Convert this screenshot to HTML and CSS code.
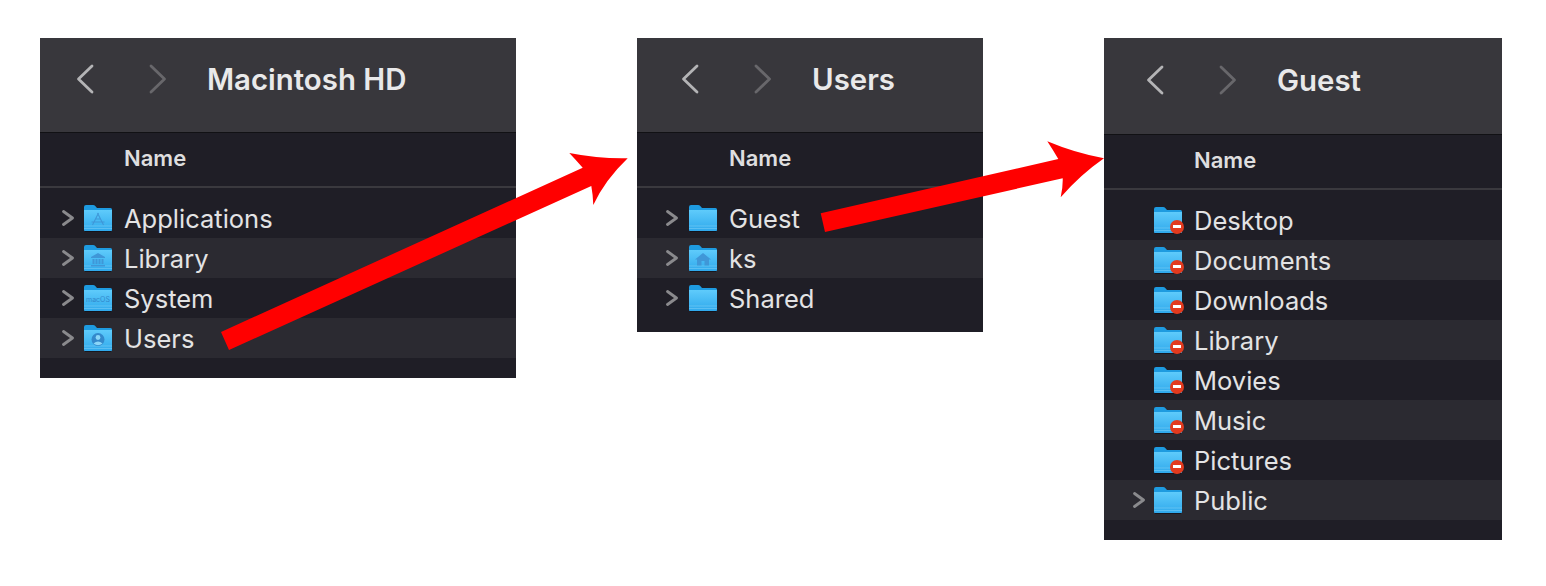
FILE: index.html
```html
<!DOCTYPE html>
<html lang="en">
<head>
    <meta charset="UTF-8">
    <title>Finder folders</title>
    <link rel="stylesheet" href="styles.css">
</head>
<body>

<svg class="defs" width="0" height="0">
    <defs>
        <linearGradient id="folderBody" x1="0" y1="0" x2="0" y2="1">
            <stop offset="0" stop-color="#5fcbfb"/>
            <stop offset="1" stop-color="#2fa9ec"/>
        </linearGradient>
        <symbol id="folder" viewBox="0 0 28 27">
            <path d="M0 2Q0 0 2 0H9Q10.500 0 11.500 1.200L13 3H26.500Q28 3 28 4.500V24.500Q28 26 26.500 26H1.500Q0 26 0 24.500Z" fill="#1e9be0"/>
            <path d="M0 5H28V24.500Q28 26 26.500 26H1.500Q0 26 0 24.500Z" fill="url(#folderBody)"/>
            <path d="M0 21H28M0 23.500H28" stroke="#86d4f8" stroke-width="0.700" opacity="0.700"/>
            <path d="M1 26.500H27" stroke="#0d0d14" stroke-width="1" opacity="0.600"/>
        </symbol>
    </defs>
</svg>

<div class="page">

    <!-- Macintosh HD -->
    <section class="window win-first">
        <div class="toolbar">
            <svg class="nav back" viewBox="0 0 18 30"><path d="M16 2L2.500 15L16 28"/></svg>
            <svg class="nav forward" viewBox="0 0 18 30"><path d="M2 2L15.500 15L2 28"/></svg>
            <span class="title">Macintosh HD</span>
        </div>
        <div class="header"><span class="name-col">Name</span></div>
        <div class="rows">
            <div class="row">
                <svg class="chevron" viewBox="0 0 12 16"><path d="M1.500 1.500L10.500 8L1.500 14.500"/></svg>
                <span class="icon">
                    <svg class="folder"><use href="#folder"/></svg>
                    <svg class="badge" viewBox="0 0 28 27"><path d="M14.500 8L8.500 20M13.500 8L19.500 20M7.500 17H20.500M11 14H17" stroke="#3f97d8" stroke-width="1.100" fill="none"/></svg>
                </span>
                <span class="label">Applications</span>
            </div>
            <div class="row">
                <svg class="chevron" viewBox="0 0 12 16"><path d="M1.500 1.500L10.500 8L1.500 14.500"/></svg>
                <span class="icon">
                    <svg class="folder"><use href="#folder"/></svg>
                    <svg class="badge" viewBox="0 0 28 27"><path d="M14 8L21 12V13H7V12ZM8.500 14H10.500V19H8.500ZM11.500 14H13.500V19H11.500ZM14.500 14H16.500V19H14.500ZM17.500 14H19.500V19H17.500ZM7 20H21V21.500H7Z" fill="#3f97d8"/></svg>
                </span>
                <span class="label">Library</span>
            </div>
            <div class="row">
                <svg class="chevron" viewBox="0 0 12 16"><path d="M1.500 1.500L10.500 8L1.500 14.500"/></svg>
                <span class="icon">
                    <svg class="folder"><use href="#folder"/></svg>
                    <span class="macos">macOS</span>
                </span>
                <span class="label">System</span>
            </div>
            <div class="row">
                <svg class="chevron" viewBox="0 0 12 16"><path d="M1.500 1.500L10.500 8L1.500 14.500"/></svg>
                <span class="icon">
                    <svg class="folder"><use href="#folder"/></svg>
                    <svg class="badge" viewBox="0 0 28 27"><circle cx="14" cy="14.500" r="6.500" fill="#3389cc"/><circle cx="14" cy="12.500" r="2.400" fill="#8ad6f8"/><path d="M9.500 18.500Q14 14.500 18.500 18.500Q14 22 9.500 18.500Z" fill="#8ad6f8"/></svg>
                </span>
                <span class="label">Users</span>
            </div>
        </div>
    </section>

    <!-- Users -->
    <section class="window win-second">
        <div class="toolbar">
            <svg class="nav back" viewBox="0 0 18 30"><path d="M16 2L2.500 15L16 28"/></svg>
            <svg class="nav forward" viewBox="0 0 18 30"><path d="M2 2L15.500 15L2 28"/></svg>
            <span class="title">Users</span>
        </div>
        <div class="header"><span class="name-col">Name</span></div>
        <div class="rows">
            <div class="row">
                <svg class="chevron" viewBox="0 0 12 16"><path d="M1.500 1.500L10.500 8L1.500 14.500"/></svg>
                <span class="icon"><svg class="folder"><use href="#folder"/></svg></span>
                <span class="label">Guest</span>
            </div>
            <div class="row">
                <svg class="chevron" viewBox="0 0 12 16"><path d="M1.500 1.500L10.500 8L1.500 14.500"/></svg>
                <span class="icon">
                    <svg class="folder"><use href="#folder"/></svg>
                    <svg class="badge" viewBox="0 0 28 27"><path d="M14 8L22 14.500H20V20.500H8V14.500H6ZM12.500 16V20.500H15.500V16Z" fill="#3f97d8"/></svg>
                </span>
                <span class="label">ks</span>
            </div>
            <div class="row">
                <svg class="chevron" viewBox="0 0 12 16"><path d="M1.500 1.500L10.500 8L1.500 14.500"/></svg>
                <span class="icon"><svg class="folder"><use href="#folder"/></svg></span>
                <span class="label">Shared</span>
            </div>
        </div>
    </section>

    <!-- Guest -->
    <section class="window win-third">
        <div class="toolbar">
            <svg class="nav back" viewBox="0 0 18 30"><path d="M16 2L2.500 15L16 28"/></svg>
            <svg class="nav forward" viewBox="0 0 18 30"><path d="M2 2L15.500 15L2 28"/></svg>
            <span class="title">Guest</span>
        </div>
        <div class="header"><span class="name-col">Name</span></div>
        <div class="rows">
            <div class="row">
                <span class="chevron-gap"></span>
                <span class="icon"><svg class="folder"><use href="#folder"/></svg><span class="no-access"></span></span>
                <span class="label">Desktop</span>
            </div>
            <div class="row">
                <span class="chevron-gap"></span>
                <span class="icon"><svg class="folder"><use href="#folder"/></svg><span class="no-access"></span></span>
                <span class="label">Documents</span>
            </div>
            <div class="row">
                <span class="chevron-gap"></span>
                <span class="icon"><svg class="folder"><use href="#folder"/></svg><span class="no-access"></span></span>
                <span class="label">Downloads</span>
            </div>
            <div class="row">
                <span class="chevron-gap"></span>
                <span class="icon"><svg class="folder"><use href="#folder"/></svg><span class="no-access"></span></span>
                <span class="label">Library</span>
            </div>
            <div class="row">
                <span class="chevron-gap"></span>
                <span class="icon"><svg class="folder"><use href="#folder"/></svg><span class="no-access"></span></span>
                <span class="label">Movies</span>
            </div>
            <div class="row">
                <span class="chevron-gap"></span>
                <span class="icon"><svg class="folder"><use href="#folder"/></svg><span class="no-access"></span></span>
                <span class="label">Music</span>
            </div>
            <div class="row">
                <span class="chevron-gap"></span>
                <span class="icon"><svg class="folder"><use href="#folder"/></svg><span class="no-access"></span></span>
                <span class="label">Pictures</span>
            </div>
            <div class="row">
                <svg class="chevron" viewBox="0 0 12 16"><path d="M1.500 1.500L10.500 8L1.500 14.500"/></svg>
                <span class="icon"><svg class="folder"><use href="#folder"/></svg></span>
                <span class="label">Public</span>
            </div>
        </div>
    </section>

    <!-- red annotation arrows drawn over the windows -->
    <svg class="arrows" viewBox="0 0 1546 586">
        <path d="M221 332L582.700 167.700Q575 159 569.300 153Q600 159 627.700 158.300Q605 180 593.300 205Q593 195 591.300 186L229 350Z"/>
        <path d="M820.700 213.300L1058.300 159Q1053 150 1047.300 141.300Q1075 153 1104 158.300Q1080 175 1060.700 197.300Q1063 187 1062.700 178.300L825 232Z"/>
    </svg>
</div>

</body>
</html>
```

FILE: styles.css
```css
body {
    margin: 0;
    background: #FFFFFF;
    font-family: Inter, "Noto Sans", sans-serif;
    overflow: hidden;
}
.defs {
    position: absolute;
}
.page {
    position: relative;
    display: flex;
    align-items: flex-start;
    gap: 121px;
    height: 586px;
    padding: 38px 0 0 40px;
    box-sizing: border-box;
}
.window {
    background: #1F1E26;
    color: #E3E3E4;
}
.win-first {
    width: 476px;
    --nav-left: 36px;
    --chevron-left: 22px;
    --icon-gap: 10px;
    --name-left: 85px;
    --rows-bottom: 20px;
}
.win-second {
    width: 346px;
    --nav-left: 44px;
    --chevron-left: 29px;
    --icon-gap: 11px;
    --name-left: 93px;
    --rows-bottom: 14px;
}
.win-third {
    width: 398px;
    --nav-left: 42px;
    --chevron-left: 29px;
    --icon-gap: 9px;
    --name-left: 91px;
    --rows-bottom: 20px;
}
.win-third .toolbar {
    height: 97px;
}
.toolbar {
    display: flex;
    align-items: center;
    height: 95px;
    padding-left: var(--nav-left);
    padding-bottom: 11px;
    box-sizing: border-box;
    background: #38373C;
    border-bottom: 1px solid #111114;
}
.nav {
    width: 18px;
    height: 30px;
    margin-top: -2px;
    fill: none;
    stroke-width: 2.800;
    stroke-linecap: round;
    stroke-linejoin: round;
}
.back {
    stroke: #B4B4B6;
}
.forward {
    stroke: #68676B;
    margin-left: 55px;
}
.title {
    margin-left: 40px;
    font-size: 29.400px;
    font-weight: 600;
    color: #E9E9EA;
}
.header {
    display: flex;
    align-items: center;
    height: 55px;
    padding-left: var(--name-left);
    padding-bottom: 4px;
    box-sizing: border-box;
    border-bottom: 2px solid #3A393E;
}
.name-col {
    margin-left: -1px;
    font-size: 22px;
    font-weight: 600;
    color: #DEDEDF;
}
.rows {
    padding: 10px 0 var(--rows-bottom);
}
.row {
    display: flex;
    align-items: center;
    height: 40px;
    padding-left: var(--chevron-left);
}
.row:nth-child(even) {
    background: #2B2A31;
}
.chevron {
    width: 12px;
    height: 16px;
    fill: none;
    stroke: #8A8A8D;
    stroke-width: 2.800;
    stroke-linecap: round;
    stroke-linejoin: round;
}
.chevron-gap {
    width: 12px;
}
.icon {
    position: relative;
    width: 28px;
    height: 27px;
    margin-left: var(--icon-gap);
    flex-shrink: 0;
}
.folder {
    display: block;
    width: 28px;
    height: 27px;
}
.badge {
    position: absolute;
    top: 0;
    left: 0;
    width: 28px;
    height: 27px;
}
.macos {
    position: absolute;
    top: 10px;
    left: 0;
    width: 28px;
    text-align: center;
    font-size: 7px;
    line-height: 10px;
    color: #3389CC;
}
.no-access {
    position: absolute;
    top: 13px;
    left: 16px;
    width: 14px;
    height: 14px;
    border-radius: 50%;
    background: #E23A1E;
}
.no-access::after {
    content: "";
    position: absolute;
    top: 5.500px;
    left: 3px;
    width: 8px;
    height: 3px;
    background: #FFFFFF;
}
.label {
    margin-left: 12px;
    font-size: 25.500px;
    color: #E3E3E4;
}
.arrows {
    position: absolute;
    top: 0;
    left: 0;
    width: 1546px;
    height: 586px;
    fill: #FF0000;
}
```
